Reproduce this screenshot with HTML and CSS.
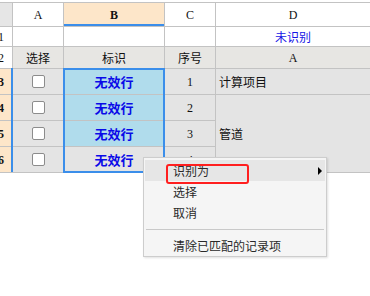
FILE: index.html
```html
<!DOCTYPE html>
<html>
<head>
<meta charset="utf-8">
<link rel="stylesheet" href="styles.css">
</head>
<body>
<div class="sheet">
  <div class="grid">
    <div class="cell corner"></div>
    <div class="cell colhdr">A</div>
    <div class="cell colhdr sel">B</div>
    <div class="cell colhdr">C</div>
    <div class="cell colhdr">D</div>

    <div class="cell rowhdr"><span>1</span></div>
    <div class="cell white"></div>
    <div class="cell white"></div>
    <div class="cell white"></div>
    <div class="cell white bluetext">未识别</div>

    <div class="cell rowhdr"><span>2</span></div>
    <div class="cell head">选择</div>
    <div class="cell head">标识</div>
    <div class="cell head">序号</div>
    <div class="cell head latin">A</div>

    <div class="cell rowhdr sel"><span>3</span></div>
    <div class="cell body"><i class="check"></i></div>
    <div class="cell mark">无效行</div>
    <div class="cell body num">1</div>
    <div class="cell body left">计算项目</div>

    <div class="cell rowhdr sel"><span>4</span></div>
    <div class="cell body"><i class="check"></i></div>
    <div class="cell mark">无效行</div>
    <div class="cell body num">2</div>
    <div class="cell body left merged">管道</div>

    <div class="cell rowhdr sel"><span>5</span></div>
    <div class="cell body"><i class="check"></i></div>
    <div class="cell mark">无效行</div>
    <div class="cell body num">3</div>

    <div class="cell rowhdr sel"><span>6</span></div>
    <div class="cell body"><i class="check"></i></div>
    <div class="cell mark gray">无效行</div>
    <div class="cell body num">4</div>
  </div>
  <div class="rowedge"></div>
  <div class="selection"></div>

  <div class="menu">
    <div class="item hover"><span>识别为</span><i class="arrow"></i></div>
    <div class="item">选择</div>
    <div class="item">取消</div>
    <div class="sep"></div>
    <div class="item">清除已匹配的记录项</div>
    <div class="annot"></div>
  </div>
</div>
</body>
</html>
```

FILE: styles.css
```css
html, body {
  margin: 0;
  padding: 0;
  background: #ffffff;
}
body {
  width: 370px;
  height: 296px;
  overflow: hidden;
  font-family: "Noto Sans CJK SC", "Noto Sans", sans-serif;
  font-size: 12px;
  color: #111;
}
.sheet {
  position: relative;
  padding-top: 2px;
  height: 294px;
}
.grid {
  display: grid;
  grid-template-columns: 12px 50px 100px 50px 1fr;
  grid-template-rows: 23px 19px 21px 25px 25px 25px 25px;
  gap: 1px;
  background: #c3c3c3;
  border-top: 1px solid #c3c3c3;
  border-bottom: 1px solid #c3c3c3;
}
.cell {
  display: flex;
  align-items: center;
  justify-content: center;
  overflow: hidden;
  white-space: nowrap;
  background: #ffffff;
  line-height: 1;
}
.corner {
  background: #e6e6e6;
}
.colhdr {
  font-family: "Liberation Serif", "DejaVu Serif", serif;
  font-size: 12px;
  background: #ffffff;
  color: #111;
}
.colhdr.sel {
  background: #fde6c9;
  font-weight: bold;
  box-shadow: inset 0 -2px 0 #3b8eea;
}
.rowhdr {
  justify-content: flex-start;
  background: #ffffff;
  font-family: "Liberation Serif", "DejaVu Serif", serif;
  font-size: 12px;
}
.rowhdr span {
  margin-left: -2px;
}
.rowhdr.sel {
  background: #fde6c9;
  font-weight: bold;
}
.white {
  background: #ffffff;
}
.bluetext {
  color: #1414e6;
}
.head {
  background: #e7e6e3;
}
.latin {
  font-family: "Liberation Serif", "DejaVu Serif", serif;
}
.body {
  background: #e4e4e4;
}
.num {
  font-family: "Liberation Serif", "DejaVu Serif", serif;
}
.left {
  justify-content: flex-start;
  padding-left: 3px;
}
.merged {
  grid-row: span 3;
}
.mark {
  background: #b0dcec;
  color: #0a0ae8;
  font-weight: bold;
  font-size: 13px;
}
.mark.gray {
  background: #e4e4e4;
}
.check {
  display: block;
  width: 11px;
  height: 11px;
  border: 1px solid #8c8c8c;
  border-radius: 2px;
  background: #ffffff;
}
.rowedge {
  position: absolute;
  left: 11px;
  top: 68px;
  width: 2px;
  height: 104px;
  background: #3b8eea;
}
.selection {
  position: absolute;
  left: 63px;
  top: 68px;
  width: 102px;
  height: 105px;
  box-sizing: border-box;
  border: 2px solid #3b8eea;
}
.menu {
  position: absolute;
  left: 143px;
  top: 157px;
  width: 184px;
  box-sizing: border-box;
  border: 1px solid #cdcdcd;
  background: #f5f5f5;
  padding: 2px 1px 0;
  box-shadow: 1px 1px 2px rgba(0, 0, 0, 0.12);
  color: #2a2a2a;
  font-size: 12px;
}
.item {
  display: flex;
  align-items: center;
  justify-content: space-between;
  height: 21px;
  padding-left: 28px;
  line-height: 21px;
}
.item.hover {
  background: #e6e6e6;
}
.arrow {
  display: block;
  width: 0;
  height: 0;
  border-left: 4px solid #000;
  border-top: 4px solid transparent;
  border-bottom: 4px solid transparent;
  margin-right: 3px;
}
.sep {
  height: 1px;
  background: #c9c9c9;
  margin: 6px 1px 5px;
}
.annot {
  position: absolute;
  left: 22px;
  top: 6px;
  width: 83px;
  height: 20px;
  box-sizing: border-box;
  border: 2px solid #ff1f1f;
  border-radius: 3px;
}
```
